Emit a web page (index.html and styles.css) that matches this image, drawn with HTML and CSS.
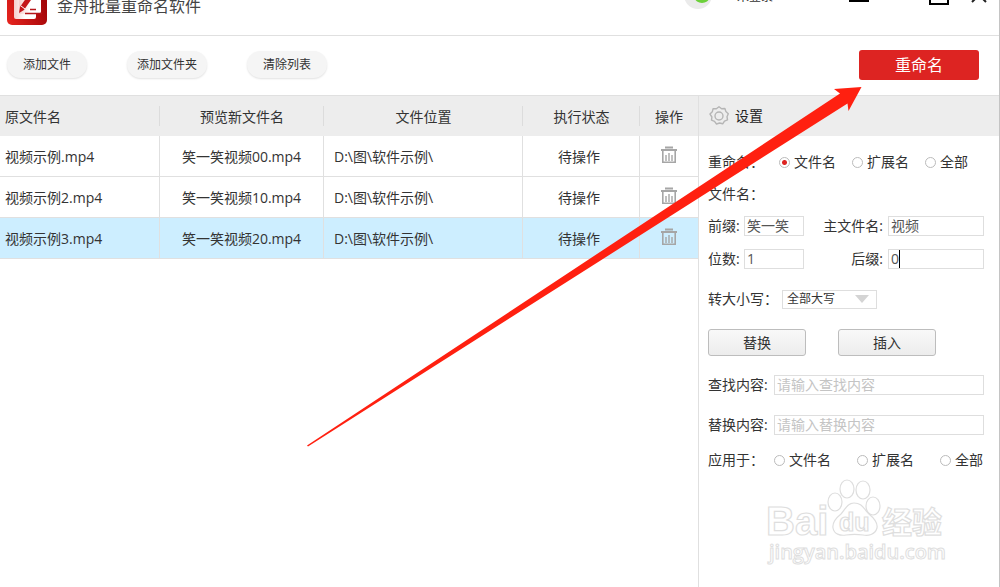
FILE: index.html
```html
<!DOCTYPE html>
<html lang="zh-CN">

<head>
 <meta charset="UTF-8">
 <meta name="viewport" content="width=device-width, initial-scale=1.0">
 <title>金舟批量重命名软件</title>
 <link rel="stylesheet" href="styles.css">
</head>

<body>
   <svg width="0" height="0" class="defs" aria-hidden="true">
      <symbol id="trash" viewBox="0 0 18 18">
         <path d="M5 1.5h8M1 4h16" stroke="#a6a6a6" stroke-width="2" fill="none"/>
         <path d="M2.8 4v12.3h12.4V4" stroke="#a6a6a6" stroke-width="1.6" fill="none"/>
         <path d="M6 9v6M9 7v8M12 9v6" stroke="#a6a6a6" stroke-width="1.4" fill="none"/>
      </symbol>
   </svg>

   <div id="app">
      <header class="titlebar">
         <svg class="logo" viewBox="0 0 40 40" aria-hidden="true">
            <defs>
               <linearGradient id="red" x1="0" y1="1" x2="1" y2="0.6">
                  <stop offset="0" stop-color="#e8251f"/>
                  <stop offset="1" stop-color="#a30508"/>
               </linearGradient>
               <linearGradient id="paper" x1="0" y1="0" x2="1" y2="0">
                  <stop offset="0" stop-color="#f6cfcd"/>
                  <stop offset="0.5" stop-color="#fff"/>
               </linearGradient>
            </defs>
            <rect width="40" height="40" rx="5" fill="url(#red)"/>
            <path d="M7 6h22v26q0 2-2 2H9q-2 0-2-2z" fill="url(#paper)"/>
            <path d="M12 4h22v22q0 3-3 3H12z" fill="url(#paper)"/>
            <path d="M22 9l4 3-9 13-5 3 1-6z" fill="#c4161a"/>
            <path d="M14 21l4 3" stroke="#fff" stroke-width="1"/>
            <path d="M23 24.5h6M18 28.5h17" stroke="#b5161a" stroke-width="1.3"/>
         </svg>
         <h1>金舟批量重命名软件</h1>
         <div class="window_tools">
            <svg class="avatar" viewBox="0 0 28 28" aria-hidden="true">
               <circle cx="14" cy="14" r="14" fill="#ebebeb"/>
               <ellipse cx="18" cy="17" rx="7" ry="5" fill="#6cd03a"/>
            </svg>
            <span class="user">未登录</span>
            <button class="win_btn win_min" aria-label="最小化"><svg viewBox="0 0 20 20"><path d="M0 15.5h20" stroke="#000" stroke-width="3"/></svg></button>
            <button class="win_btn win_max" aria-label="最大化"><svg viewBox="0 0 20 20"><rect x="1" y="1" width="18" height="18" fill="none" stroke="#000" stroke-width="2"/></svg></button>
            <button class="win_btn" aria-label="关闭"><svg viewBox="0 0 20 20"><path d="M3 3l14 14M17 3L3 17" stroke="#222" stroke-width="2"/></svg></button>
         </div>
      </header>

      <div class="toolbar">
         <button class="pill">添加文件</button>
         <button class="pill">添加文件夹</button>
         <button class="pill">清除列表</button>
         <button class="rename_btn">重命名</button>
      </div>

      <div class="workspace">
         <main class="file_list">
            <table>
               <thead>
                  <tr>
                     <th class="col_name">原文件名</th>
                     <th class="col_preview">预览新文件名</th>
                     <th class="col_path">文件位置</th>
                     <th class="col_state">执行状态</th>
                     <th class="col_action">操作</th>
                  </tr>
               </thead>
               <tbody>
                  <tr>
                     <td class="col_name">视频示例.mp4</td>
                     <td>笑一笑视频00.mp4</td>
                     <td class="col_path">D:\图\软件示例\</td>
                     <td class="col_state">待操作</td>
                     <td><button class="del" aria-label="删除"><svg><use href="#trash"/></svg></button></td>
                  </tr>
                  <tr>
                     <td class="col_name">视频示例2.mp4</td>
                     <td>笑一笑视频10.mp4</td>
                     <td class="col_path">D:\图\软件示例\</td>
                     <td class="col_state">待操作</td>
                     <td><button class="del" aria-label="删除"><svg><use href="#trash"/></svg></button></td>
                  </tr>
                  <tr class="active">
                     <td class="col_name">视频示例3.mp4</td>
                     <td>笑一笑视频20.mp4</td>
                     <td class="col_path">D:\图\软件示例\</td>
                     <td class="col_state">待操作</td>
                     <td><button class="del" aria-label="删除"><svg><use href="#trash"/></svg></button></td>
                  </tr>
               </tbody>
            </table>
         </main>

         <aside class="settings">
            <h2>
               <svg class="gear" viewBox="0 0 20 20" aria-hidden="true">
                  <path d="M10 .8l2.6 1.9 3.3-.2 1 3.1 2.4 2.2-1.3 2.9.5 3.2-3 1.2-1.8 2.7-3.1-.8-3.1 1-2-2.6-3-1.2.4-3.2L1 8.100l2.300-2.300.8-3.200 3.300.1z" fill="none" stroke="#b5b5b5" stroke-width="1.400" stroke-linejoin="round"/>
                  <circle cx="10" cy="10" r="4" fill="none" stroke="#b5b5b5" stroke-width="1.400"/>
               </svg>
               设置
            </h2>
            <form>
               <div class="row radios" role="radiogroup" aria-labelledby="scope">
                  <span class="title" id="scope">重命名：</span>
                  <label><input type="radio" name="scope" checked>文件名</label>
                  <label><input type="radio" name="scope">扩展名</label>
                  <label><input type="radio" name="scope">全部</label>
               </div>
               <div class="row">文件名：</div>
               <div class="row fields">
                  <label for="prefix">前缀:</label>
                  <input type="text" id="prefix" value="笑一笑">
                  <label for="main" class="right">主文件名:</label>
                  <input type="text" id="main" value="视频">
               </div>
               <div class="row fields digits">
                  <label for="digits">位数:</label>
                  <input type="text" id="digits" value="1">
                  <label for="suffix" class="right">后缀:</label>
                  <span class="editing"><input type="text" id="suffix" value="0"></span>
               </div>
               <div class="row case">
                  <label for="case">转大小写：</label>
                  <span class="select">
                     <select id="case">
                        <option>全部大写</option>
                        <option>全部小写</option>
                     </select>
                  </span>
               </div>
               <div class="row modes">
                  <button type="button">替换</button>
                  <button type="button">插入</button>
               </div>
               <div class="row search">
                  <label for="find">查找内容:</label>
                  <input type="text" id="find" placeholder="请输入查找内容">
               </div>
               <div class="row search">
                  <label for="replace">替换内容:</label>
                  <input type="text" id="replace" placeholder="请输入替换内容">
               </div>
               <div class="row radios apply" role="radiogroup" aria-labelledby="apply">
                  <span class="title" id="apply">应用于：</span>
                  <label><input type="radio" name="apply">文件名</label>
                  <label><input type="radio" name="apply">扩展名</label>
                  <label><input type="radio" name="apply">全部</label>
               </div>
            </form>
            <svg class="watermark" viewBox="0 0 180 90">
               <g fill="#fff" stroke="#dedede" stroke-width="1.200">
                  <ellipse cx="68" cy="25" rx="7" ry="9"/>
                  <ellipse cx="80" cy="12" rx="7" ry="9"/>
                  <ellipse cx="96" cy="13" rx="7" ry="9"/>
                  <ellipse cx="106" cy="29" rx="7" ry="9"/>
                  <path d="M87 26c8 0 10 6 15 11 6 5 9 9 8 14-2 7-9 8-14 7-6-1-11-1-17 0-6 1-12-1-13-7-1-6 3-10 8-14 4-4 6-11 13-11z"/>
                  <text x="-1" y="58" class="wm_bai">Bai</text>
                  <text x="72" y="54" class="wm_du">du</text>
                  <text x="115" y="56" class="wm_cn">经验</text>
                  <text x="2" y="82" class="wm_url">jingyan.baidu.com</text>
               </g>
            </svg>
         </aside>
      </div>

      <svg class="arrow" width="862" height="447" aria-hidden="true">
         <path d="M307 445.500L840 93.500 834 89 861.500 87 848.500 111 847.500 103.500 308 446.500z" fill="#ff2010"/>
      </svg>
   </div>
</body>

</html>
```

FILE: styles.css
```css
* { box-sizing: border-box; }
body { margin: 0; background: #fff; color: #333; font: 14px/20px "Open Sans", "Noto Sans CJK SC", sans-serif; }
button, input, select { font: inherit; color: inherit; margin: 0; padding: 0; }
button { border: 0; background: none; cursor: pointer; }
h1, h2 { margin: 0; font-weight: 400; }
.defs { position: absolute; }

#app { position: relative; display: flex; flex-direction: column; min-height: 100vh; overflow: hidden; border-right: 1px solid #c4c4c4; }

/* title bar, its top part is out of the window */
.titlebar { display: flex; align-items: center; height: 61px; margin-top: -25px; padding: 0 10px 0 7px; border-bottom: 1px solid #e0e0e0; }
.logo { width: 40px; height: 40px; }
.titlebar h1 { margin-left: 10px; padding-top: 2px; font-size: 16px; line-height: 24px; color: #444; }
.window_tools { display: flex; align-items: center; align-self: flex-start; height: 40px; margin-left: auto; }
.avatar { width: 28px; height: 28px; }
.user { width: 36px; margin: 0 76px 0 25px; padding-top: 4px; font-size: 12px; }
.win_btn { width: 20px; height: 20px; }
.win_btn svg { display: block; }
.win_min { margin-right: 60px; }
.win_max { margin-right: 20px; }

.toolbar { display: flex; align-items: center; gap: 40px; height: 59px; padding: 0 20px 2px 7px; }
.pill { width: 80px; height: 27px; border-radius: 14px; background: #f5f5f5; box-shadow: 0 1px 2px rgba(0,0,0,.12); font-size: 12px; }
.rename_btn { width: 120px; height: 30px; margin-left: auto; border-radius: 3px; background: #dd2422; color: #fff; font-size: 16px; }

.workspace { display: flex; flex: 1; }
.file_list { flex: 1; min-width: 0; }
table { width: 100%; table-layout: fixed; border-spacing: 0; }
th, td { height: 41px; padding: 2px 0 0; text-align: center; font-weight: 400; }
th { border-top: 1px solid #e0e0e0; background: #ededed linear-gradient(#dcdcdc, #dcdcdc) no-repeat right center / 1px 20px; }
td { border-right: 1px solid #e0e0e0; border-bottom: 1px solid #e0e0e0; }
th:last-child { background: #ededed; }
td:last-child { border-right: 0; }
tr.active td { background: #cdeeff; }
.col_name { width: 160px; padding-left: 5px; text-align: left; }
.col_preview { width: 164px; }
td.col_path { padding-left: 10px; text-align: left; }
.col_state { width: 117px; }
td.col_state { padding-right: 4px; }
.col_action { width: 58px; }
.del { display: block; width: 18px; height: 18px; margin: -4px auto 0; }
.del svg { display: block; width: 18px; height: 18px; }

.settings { width: 301px; border-left: 1px solid #e0e0e0; }
.settings h2 { display: flex; align-items: center; gap: 6px; height: 41px; padding-left: 10px; border-top: 1px solid #e0e0e0; background: #ededed; font-size: 14px; line-height: 20px; color: #222; }
.gear { width: 20px; height: 20px; }
form { padding: 16px 15px 0 9px; }
.row { display: flex; align-items: center; height: 20px; margin-bottom: 12px; }
.row input[type=text] { width: 60px; height: 20px; padding: 0 2px; border: 1px solid #dedede; background: #fff; color: #555; outline: 0; }
.row input::placeholder { color: #c4c4c4; opacity: 1; }

.radios { gap: 16px; }
.radios .title { width: 55px; white-space: nowrap; }
.radios label { display: flex; align-items: center; gap: 4px; }
.radios input { appearance: none; width: 11px; height: 11px; border: 1px solid #bbb; border-radius: 50%; background: #fff; }
.radios input:checked { background: radial-gradient(#dd2422 2px, #fff 3px); }
.apply { gap: 26px; }
.apply .title { width: 40px; }

.fields label { width: 36px; }
.fields label.right { flex: 1; padding-right: 5px; text-align: right; }
.fields #main, .fields #suffix { width: 96px; }
.digits { margin: 13px 0 20px; }
/* text cursor */
.editing { position: relative; display: flex; }
.editing::after { content: ""; position: absolute; left: 11px; top: 1px; width: 1px; height: 18px; background: #000; }

.case { margin-bottom: 20px; }
.case label { width: 74px; }
.select { position: relative; }
.select select { display: block; width: 95px; height: 19px; padding-left: 4px; appearance: none; border: 1px solid #dedede; border-radius: 0; background: #fff; font-size: 12px; line-height: 16px; }
.select::after { content: ""; position: absolute; right: 8px; top: 5px; border: 7px solid transparent; border-top: 8px solid #d4d4d4; border-bottom: 0; pointer-events: none; }

.modes { gap: 32px; height: 27px; margin-bottom: 19px; }
.modes button { width: 98px; height: 27px; border: 1px solid #bdbdbd; border-radius: 3px; background: linear-gradient(#f9f9f9, #ececec); }
.search { margin-bottom: 20px; }
.search label { width: 66px; }
.search input[type=text] { flex: 1; }
.search + .apply { margin-top: -5px; }

.watermark { display: block; width: 180px; height: 90px; margin: -5px 0 0 68px; overflow: visible; }
.wm_bai { font: bold 40px "Liberation Sans", sans-serif; }
.wm_du { font: bold 25px "Liberation Sans", sans-serif; }
.wm_cn { font: bold 30px "Noto Sans CJK SC", sans-serif; }
.wm_url { font: 600 20px "Open Sans", sans-serif; stroke-width: 1px; }

.arrow { position: absolute; left: 0; top: 0; pointer-events: none; }
```
